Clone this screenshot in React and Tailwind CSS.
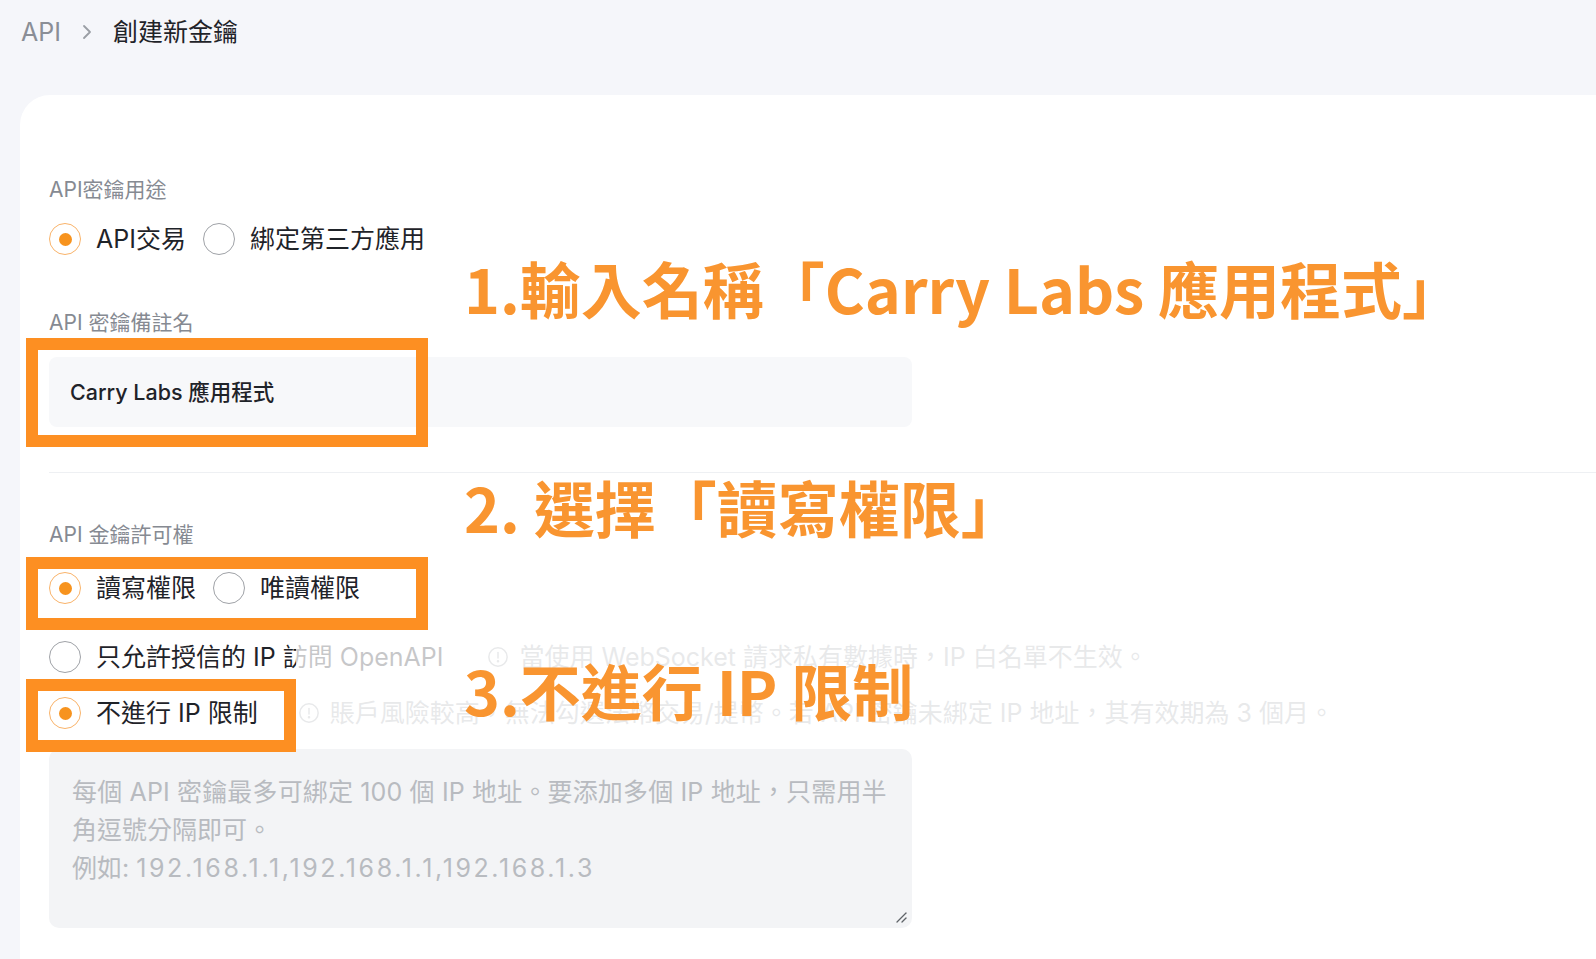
import React from "react";

function Radio({ checked }) {
  return checked ? (
    <span className="flex h-[32px] w-[32px] shrink-0 items-center justify-center rounded-full border-[1.5px] border-[#f9b36a] bg-white">
      <span className="h-[13px] w-[13px] rounded-full bg-[#f7931e]" />
    </span>
  ) : (
    <span className="h-[32px] w-[32px] shrink-0 rounded-full border-[1.5px] border-[#9fa2a7] bg-white" />
  );
}

function Option({ checked, children }) {
  return (
    <div className="flex items-center gap-[15px]">
      <Radio checked={checked} />
      <span className="whitespace-nowrap text-[25px] leading-[32px] text-[#1f2329]">{children}</span>
    </div>
  );
}

function InfoIcon() {
  return (
    <svg width="22" height="22" viewBox="0 0 24 24" fill="none" stroke="currentColor" strokeWidth="1.6" strokeLinecap="round" className="shrink-0">
      <circle cx="12" cy="12" r="10" />
      <line x1="12" y1="7" x2="12" y2="13" />
      <circle cx="12" cy="16.6" r="0.6" fill="currentColor" />
    </svg>
  );
}

function Hint({ children, className }) {
  return (
    <div className={"flex items-center gap-[10px] whitespace-nowrap text-[25px] leading-[32px] text-[#a3a7ad] " + className}>
      <InfoIcon />
      <span>{children}</span>
    </div>
  );
}

function Label({ children, className }) {
  return (
    <div className={"text-[21px] leading-[28px] text-[#868a92] " + className}>{children}</div>
  );
}

export default function App() {
  return (
    <div className="relative h-[959px] w-full overflow-hidden bg-[#f5f6fa] font-['Inter','Noto_Sans_CJK_TC',sans-serif]">
      {/* Breadcrumb */}
      <div className="flex items-center pl-[21px] pt-[16px] text-[25px] leading-[32px]">
        <span className="text-[#8a8e96]">API</span>
        <svg width="14" height="20" viewBox="0 0 14 20" fill="none" stroke="#9a9ea5" strokeWidth="1.8" strokeLinecap="round" strokeLinejoin="round" className="ml-[19px] mr-[19px]">
          <path d="M4 4l6 6-6 6" />
        </svg>
        <span className="text-[#1f2329]">創建新金鑰</span>
      </div>

      {/* Card */}
      <div className="ml-[20px] mt-[47px] h-[900px] rounded-tl-[30px] bg-white pl-[29px] pt-[81px]">
        <Label>API密鑰用途</Label>
        <div className="mt-[19px] flex items-center gap-[17px]">
          <Option checked>API交易</Option>
          <Option>綁定第三方應用</Option>
        </div>

        <Label className="mt-[54px]">API 密鑰備註名</Label>
        <div className="mt-[20px] flex h-[70px] w-[863px] items-center rounded-[8px] bg-[#f7f8fa] pl-[21px] text-[21.5px] font-medium text-[#1f2329]">
          Carry Labs 應用程式
        </div>

        <div className="mt-[45px] h-[1px] bg-[#eef0f3]" />

        <Label className="mt-[48px]">API 金鑰許可權</Label>
        <div className="mt-[23px] flex items-center gap-[17px]">
          <Option checked>讀寫權限</Option>
          <Option>唯讀權限</Option>
        </div>

        <div className="mt-[37px] flex items-center">
          <Option>只允許授信的 IP 訪問 OpenAPI</Option>
          <Hint className="ml-[44px]">當使用 WebSocket 請求私有數據時，IP 白名單不生效。</Hint>
        </div>
        <div className="mt-[24px] flex items-center">
          <Option checked>不進行 IP 限制</Option>
          <Hint className="ml-[40px]">賬戶風險較高，無法勾選法幣交易/提幣。若 API 密鑰未綁定 IP 地址，其有效期為 3 個月。</Hint>
        </div>

        <div className="relative mt-[20px] h-[179px] w-[863px] rounded-[10px] bg-[#f3f4f6] pl-[23px] pt-[24px] text-[25px] leading-[38px] text-[#b8bbc0]">
          <div className="whitespace-nowrap tracking-[0.15px]">每個 API 密鑰最多可綁定 100 個 IP 地址。要添加多個 IP 地址，只需用半</div>
          <div className="whitespace-nowrap">角逗號分隔即可。</div>
          <div className="whitespace-nowrap">例如: <span className="tracking-[2.6px]">192.168.1.1,192.168.1.1,192.168.1.3</span></div>
          <svg width="12" height="12" viewBox="0 0 12 12" className="absolute bottom-[5px] right-[5px]" stroke="#5f6368" strokeWidth="1.3" strokeLinecap="round">
            <line x1="11" y1="2" x2="2" y2="11" />
            <line x1="11" y1="7" x2="7" y2="11" />
          </svg>
        </div>
      </div>

      {/* Annotation overlay fade */}
      <div className="absolute left-[296px] top-[632px] h-[110px] w-[1080px] bg-white/75" />

      {/* Orange highlight boxes */}
      <div className="absolute left-[26px] top-[338px] h-[109px] w-[402px] border-[12px] border-[#fd8f22]" />
      <div className="absolute left-[26px] top-[557px] h-[73px] w-[402px] border-[12px] border-[#fd8f22]" />
      <div className="absolute left-[26px] top-[679px] h-[73px] w-[270px] border-[12px] border-[#fd8f22]" />

      {/* Annotation texts */}
      <div className="absolute left-[464px] top-[256px] whitespace-nowrap font-['Noto_Sans_CJK_TC',sans-serif] text-[61px] font-bold leading-[64px] text-[#f99530]">
        1.輸入名稱「Carry Labs 應用程式」
      </div>
      <div className="absolute left-[464px] top-[475px] whitespace-nowrap font-['Noto_Sans_CJK_TC',sans-serif] text-[61px] font-bold leading-[64px] text-[#f99530]">
        2. 選擇「讀寫權限」
      </div>
      <div className="absolute left-[464px] top-[658px] whitespace-nowrap font-['Noto_Sans_CJK_TC',sans-serif] text-[61px] font-bold leading-[64px] text-[#f99530]">
        3.不進行 IP 限制
      </div>
    </div>
  );
}
